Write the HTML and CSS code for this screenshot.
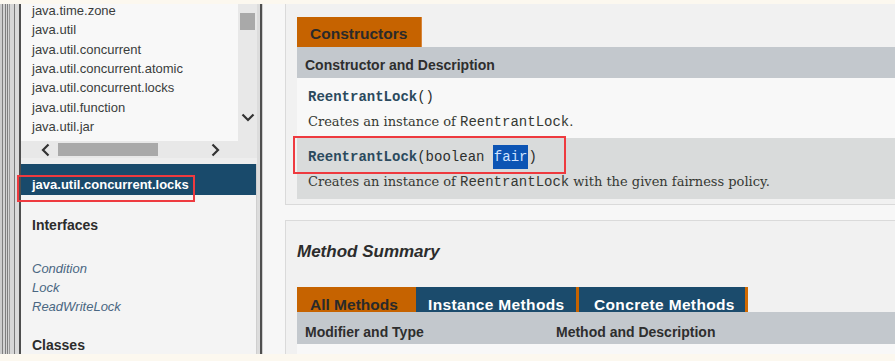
FILE: index.html
```html
<!DOCTYPE html>
<html>
<head>
<meta charset="utf-8">
<link rel="stylesheet" href="styles.css">
</head>
<body>
<div class="screen">
  <div class="rail"></div>
  <div class="sidebar">
    <div class="pkg-panel">
      <div class="pkg-view">
        <ul class="pkg-list">
          <li>java.time.zone</li>
          <li>java.util</li>
          <li>java.util.concurrent</li>
          <li>java.util.concurrent.atomic</li>
          <li>java.util.concurrent.locks</li>
          <li>java.util.function</li>
          <li>java.util.jar</li>
        </ul>
      </div>
      <div class="vscroll">
        <div class="vthumb"></div>
        <svg class="chev-down" width="14" height="9" viewBox="0 0 14 9"><path d="M1.5 1.5 L7 7 L12.5 1.5" fill="none" stroke="#333" stroke-width="2.2"/></svg>
      </div>
      <div class="hscroll">
        <svg class="chev" width="9" height="14" viewBox="0 0 9 14"><path d="M7.5 1.5 L2 7 L7.5 12.5" fill="none" stroke="#333" stroke-width="2.2"/></svg>
        <div class="hthumb"></div>
        <svg class="chev" width="9" height="14" viewBox="0 0 9 14"><path d="M1.5 1.5 L7 7 L1.5 12.5" fill="none" stroke="#333" stroke-width="2.2"/></svg>
      </div>
      <div class="corner"></div>
    </div>
    <div class="pkg-frame">
      <div class="pkg-title">java.util.concurrent.locks<span class="mark mark-pkg"></span></div>
      <h2 class="side-h">Interfaces</h2>
      <ul class="side-list">
        <li>Condition</li>
        <li>Lock</li>
        <li>ReadWriteLock</li>
      </ul>
      <h2 class="side-h side-h2">Classes</h2>
    </div>
  </div>
  <div class="divider"></div>
  <div class="main">
    <section class="block block-ctor">
      <div class="tabs"><span class="tab tab-on tab-single">Constructors</span></div>
      <div class="thead"><span>Constructor and Description</span></div>
      <div class="row row-a">
        <div class="sig"><b>ReentrantLock</b>()</div>
        <div class="desc">Creates an instance of <code>ReentrantLock</code>.</div>
      </div>
      <div class="row row-b">
        <div class="sig"><b>ReentrantLock</b>(boolean <span class="sel">fair</span>)</div>
        <div class="desc">Creates an instance of <code>ReentrantLock</code> with the given fairness policy.</div>
        <span class="mark mark-sig"></span>
      </div>
    </section>
    <section class="block block-method">
      <h3 class="sum-h">Method Summary</h3>
      <div class="tabs">
        <span class="tab tab-on">All Methods</span>
        <span class="tab tab-off tab-inst">Instance Methods</span>
        <span class="tab tab-off tab-conc">Concrete Methods</span>
      </div>
      <div class="thead thead-2"><span class="col1">Modifier and Type</span><span>Method and Description</span></div>
      <div class="row row-c"></div>
    </section>
  </div>
</div>
</body>
</html>
```

FILE: styles.css
```css
html, body {
  margin: 0;
  padding: 0;
}
body {
  background: #fcf8ef;
  width: 895px;
  height: 361px;
  overflow: hidden;
  font-family: "Liberation Sans", Arial, sans-serif;
  color: #353833;
}
.screen {
  margin-top: 4px;
  height: 350px;
  display: flex;
  overflow: hidden;
}
.rail {
  flex: none;
  width: 21px;
  background: linear-gradient(to right,
    #cdcdcd 0 2px, #7e7e7e 2px 3px, #d2d2d2 3px 5px, #7e7e7e 5px 6px,
    #d2d2d2 6px 7px, #808080 7px 8px, #d4d4d4 8px 9.5px, #9a9a9a 9.5px 10.5px,
    #d6d6d6 10.5px 14px, #7a7a7a 14px 15px, #dadada 15px 19px, #4e4e4e 19px 21px);
}
.sidebar {
  flex: none;
  width: 236px;
  display: flex;
  flex-direction: column;
}
.pkg-panel {
  flex: none;
  height: 160px;
  display: grid;
  grid-template-columns: 1fr 19px;
  grid-template-rows: 137px 17px 6px;
  background: #eeeeee;
}
.pkg-view {
  overflow: hidden;
  background: #f8f8f8;
}
.pkg-list {
  list-style: none;
  margin: -3px 0 0;
  padding: 0 0 0 11px;
  font-size: 13px;
  line-height: 19.33px;
  color: #3a3d3c;
}
.vscroll {
  grid-row: 1;
  grid-column: 2;
  background: #e8e8e8;
  display: flex;
  flex-direction: column;
  align-items: center;
}
.vthumb {
  width: 15px;
  height: 17px;
  margin-top: 9px;
  background: #a9a9a9;
}
.chev-down {
  margin-top: 83px;
}
.hscroll {
  grid-row: 2;
  grid-column: 1;
  background: #e8e8e8;
  display: flex;
  align-items: center;
  padding-left: 20px;
}
.hthumb {
  width: 100px;
  height: 13px;
  margin-left: 8px;
  margin-right: 53px;
  background: #a9a9a9;
}
.corner {
  grid-row: 2;
  grid-column: 2;
  background: #e8e8e8;
}
.pkg-frame {
  flex: 1;
  background: #f4f4f4;
  border-right: 1px solid #cfcfcf;
}
.pkg-title {
  position: relative;
  height: 31px;
  box-sizing: border-box;
  padding: 13px 0 0 11px;
  background: #194a6b;
  color: #ffffff;
  font-weight: bold;
  font-size: 13px;
  line-height: 16px;
}
.mark {
  position: absolute;
  border: 2px solid #ee3a3f;
  box-sizing: border-box;
}
.mark-pkg {
  left: -4px;
  top: 11px;
  width: 178px;
  height: 27px;
}
.side-h {
  margin: 22px 0 0 11px;
  font-size: 14px;
  line-height: 16px;
  font-weight: bold;
  color: #2c2c2c;
}
.side-list {
  list-style: none;
  margin: 26px 0 0;
  padding: 0 0 0 11px;
  font-size: 13px;
  line-height: 19px;
  font-style: italic;
  color: #4a6782;
}
.side-h2 {
  margin-top: 21px;
}
.divider {
  flex: none;
  width: 6px;
  background: linear-gradient(to right, #dcdcdc 0 3px, #4f4f4f 3px 5px, #cfcfcf 5px 6px);
}
.main {
  flex: 1;
  background: #f7f7f7;
  padding-left: 22px;
  overflow: hidden;
}
.block {
  border: 1px solid #dadada;
  border-right: none;
  background: #f1f1f1;
  padding-left: 11px;
}
.block-ctor {
  border-top: none;
  padding-top: 13px;
  padding-bottom: 5px;
}
.block-method {
  margin-top: 15px;
  padding-top: 21px;
}
.tabs {
  display: flex;
  height: 30px;
}
.tab {
  display: block;
  font-weight: bold;
  font-size: 15.5px;
  padding: 0 13px;
  white-space: nowrap;
  box-sizing: border-box;
}
.tab-single {
  height: 30px;
  padding-top: 4px;
  line-height: 26px;
  width: 125px;
  border-right: 1px solid #d8853a;
}
.tab-on {
  background: #c66300;
  color: #2a2a2a;
}
.block-method .tabs {
  height: 25px;
  margin-top: 25px;
}
.block-method .tab {
  height: 25px;
  padding-top: 10px;
  line-height: 16px;
}
.block-method .tab-on {
  width: 119px;
}
.tab-off {
  background: #1b4b6c;
  color: #ffffff;
  letter-spacing: 0.35px;
}
.tab-inst {
  width: 163px;
  padding-left: 12px;
  border-right: 3px solid #c66300;
}
.tab-conc {
  width: 169px;
  padding-left: 15px;
  padding-right: 0;
  border-right: 3px solid #d26a00;
}
.thead {
  height: 31px;
  box-sizing: border-box;
  background: #c3c8cd;
  font-weight: bold;
  font-size: 14px;
  padding-top: 5px;
  line-height: 26px;
  padding-left: 8px;
  color: #2e2e2e;
}
.thead-2 {
  height: 32px;
  display: flex;
  padding-top: 8px;
  line-height: 24px;
}
.col1 {
  width: 251px;
}
.row {
  position: relative;
  box-sizing: border-box;
  padding: 10px 0 0 11px;
}
.row-a {
  height: 60px;
  background: #f8f8f8;
}
.row-b {
  height: 61px;
  background: #d9dbdb;
}
.row-c {
  height: 12px;
  background: #f8f8f8;
  padding: 0;
}
.sig {
  font-family: "Liberation Mono", "Courier New", monospace;
  font-size: 14px;
  line-height: 18px;
  color: #2d2f2e;
}
.sig b {
  color: #2b4a5e;
}
.sel {
  background: #0c54b4;
  color: #cfe2ff;
  padding: 4px 1px;
}
.desc {
  margin-top: 7px;
  font-family: "DejaVu Serif", Georgia, serif;
  font-size: 13px;
  line-height: 18px;
  color: #353833;
}
.desc code {
  font-family: "Liberation Mono", "Courier New", monospace;
  font-size: 14px;
}
.mark-sig {
  left: -4px;
  top: -2px;
  width: 273px;
  height: 38px;
}
.sum-h {
  margin: 0;
  font-size: 17px;
  line-height: 20px;
  font-weight: bold;
  font-style: italic;
  color: #2c2c2c;
}
```
